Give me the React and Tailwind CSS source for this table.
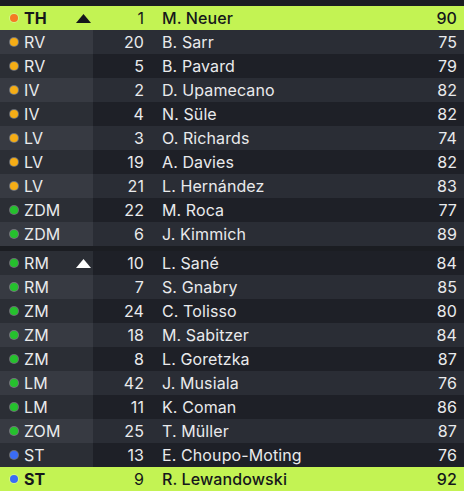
import React from "react";

const players = [
  { pos: "TH", dot: "bg-[#f47a23]", nr: 1, name: "M. Neuer", ovr: 90, hl: true, tri: "dark" },
  { pos: "RV", dot: "bg-[#f5ad16]", nr: 20, name: "B. Sarr", ovr: 75 },
  { pos: "RV", dot: "bg-[#f5ad16]", nr: 5, name: "B. Pavard", ovr: 79 },
  { pos: "IV", dot: "bg-[#f5ad16]", nr: 2, name: "D. Upamecano", ovr: 82 },
  { pos: "IV", dot: "bg-[#f5ad16]", nr: 4, name: "N. Süle", ovr: 82 },
  { pos: "LV", dot: "bg-[#f5ad16]", nr: 3, name: "O. Richards", ovr: 74 },
  { pos: "LV", dot: "bg-[#f5ad16]", nr: 19, name: "A. Davies", ovr: 82 },
  { pos: "LV", dot: "bg-[#f5ad16]", nr: 21, name: "L. Hernández", ovr: 83 },
  { pos: "ZDM", dot: "bg-[#25c12d]", nr: 22, name: "M. Roca", ovr: 77 },
  { pos: "ZDM", dot: "bg-[#25c12d]", nr: 6, name: "J. Kimmich", ovr: 89, divider: true },
  { pos: "RM", dot: "bg-[#25c12d]", nr: 10, name: "L. Sané", ovr: 84, tri: "light" },
  { pos: "RM", dot: "bg-[#25c12d]", nr: 7, name: "S. Gnabry", ovr: 85 },
  { pos: "ZM", dot: "bg-[#25c12d]", nr: 24, name: "C. Tolisso", ovr: 80 },
  { pos: "ZM", dot: "bg-[#25c12d]", nr: 18, name: "M. Sabitzer", ovr: 84 },
  { pos: "ZM", dot: "bg-[#25c12d]", nr: 8, name: "L. Goretzka", ovr: 87 },
  { pos: "LM", dot: "bg-[#25c12d]", nr: 42, name: "J. Musiala", ovr: 76 },
  { pos: "LM", dot: "bg-[#25c12d]", nr: 11, name: "K. Coman", ovr: 86 },
  { pos: "ZOM", dot: "bg-[#25c12d]", nr: 25, name: "T. Müller", ovr: 87 },
  { pos: "ST", dot: "bg-[#3a6cf4]", nr: 13, name: "E. Choupo-Moting", ovr: 76 },
  { pos: "ST", dot: "bg-[#3a6cf4]", nr: 9, name: "R. Lewandowski", ovr: 92, hl: true },
];

// kleines Dreieck neben der Position
function Triangle({ color }) {
  return (
    <svg width="15" height="9" viewBox="0 0 15 9" className="mr-[2px]">
      <path d="M7.5 0L15 9H0z" fill={color} />
    </svg>
  );
}

function Row({ p, i }) {
  const even = i % 2 === 1;
  const main = p.hl ? "bg-[#c3f353]" : even ? "bg-[#2a2d35]" : "bg-[#1e2027]";
  const left = p.hl ? "bg-[#c3f353]" : even ? "bg-[#373a42]" : "bg-[#2b2e35]";
  const text = p.hl ? "text-[#15171b]" : "text-[#e9eaec]";
  return (
    <div className={`flex h-[24px] items-center ${main} ${text}`}>
      <div className={`flex h-full w-[93px] shrink-0 items-center ${left}`}>
        <span className={`ml-[10px] h-[8px] w-[8px] rounded-full ring-1 ring-white/30 ${p.dot}`} />
        <span className={`ml-[6px] flex-1 ${p.hl ? "font-bold" : ""}`}>{p.pos}</span>
        {p.tri === "dark" && <Triangle color="#15171b" />}
        {p.tri === "light" && <Triangle color="#ffffff" />}
      </div>
      <span className="w-[51px] text-right">{p.nr}</span>
      <span className={`ml-[18px] flex-1 ${p.hl ? "font-medium" : ""}`}>{p.name}</span>
      <span className={`mr-[7px] ${p.hl ? "font-medium" : ""}`}>{p.ovr}</span>
    </div>
  );
}

export default function App() {
  return (
    <div className="h-[491px] w-[464px] overflow-hidden bg-[#1b1d22] pt-[6px] font-['Inter',sans-serif] text-[16px] tracking-[0.1px]">
      {players.map((p, i) => (
        <React.Fragment key={i}>
          <Row p={p} i={i} />
          {p.divider && <div className="h-[5px] bg-[#1b1d22]" />}
        </React.Fragment>
      ))}
    </div>
  );
}
